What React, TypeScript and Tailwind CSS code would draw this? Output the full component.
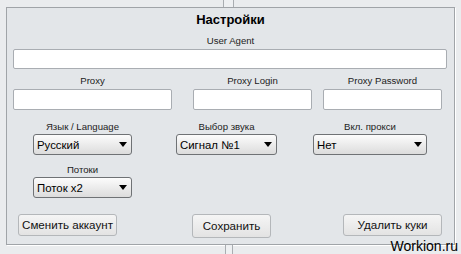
import React from 'react';

type BoxProps = { className?: string; children?: React.ReactNode };

const Label = ({ children, className = '' }: BoxProps) => (
  <div className={`text-center text-[9.6px] leading-[12px] text-[#1c1c1c] ${className}`}>{children}</div>
);

const Input = ({ className = '' }: BoxProps) => (
  <div className={`rounded-[2px] border border-[#a9adb2] bg-white ${className}`} />
);

const Select = ({ value, className = '' }: { value: string; className?: string }) => (
  <div
    className={`flex h-[21px] items-center justify-between rounded-[3px] border border-[#6f7275] bg-gradient-to-b from-[#fcfcfc] to-[#dcdcdc] pl-[3px] pr-[4px] text-[11.4px] leading-[14px] text-black ${className}`}
  >
    <span>{value}</span>
    <svg width="8" height="5" viewBox="0 0 8 5">
      <path d="M0 0H8L4 5Z" fill="#000" />
    </svg>
  </div>
);

const Button = ({ children, className = '' }: BoxProps) => (
  <div
    className={`flex items-center justify-center rounded-[3px] border border-[#b4b7ba] bg-gradient-to-b from-[#f5f5f5] to-[#e3e3e3] text-[11.6px] text-[#111] ${className}`}
  >
    {children}
  </div>
);

export default function App() {
  return (
    <div className="relative h-[254px] w-[461px] overflow-hidden bg-[#eaecee] font-['Liberation_Sans',Arial,sans-serif]">
      {/* splitter piece above the group box */}
      <div className="ml-[223px] h-[7px] w-[11px] border-x border-[#a9adb1] bg-[#eef0f2]" />

      <div className="ml-[6px] w-[449px] border border-[#a0a4a8] bg-[#e3e6e9] pb-[6px] shadow-[1px_1px_0_#ffffff]">
        <div className="pt-[4px] text-center text-[13px] font-bold leading-[16px] text-black">Настройки</div>

        <Label className="mt-[7px]">User Agent</Label>
        <Input className="ml-[6px] mt-[2px] h-[20px] w-[434px]" />

        {/* proxy fields */}
        <div className="mt-[6px] flex">
          <div className="ml-[6px] w-[159px]">
            <Label>Proxy</Label>
            <Input className="mt-[2px] h-[21px]" />
          </div>
          <div className="ml-[21px] w-[119px]">
            <Label>Proxy Login</Label>
            <Input className="mt-[2px] h-[21px]" />
          </div>
          <div className="ml-[11px] w-[119px]">
            <Label>Proxy Password</Label>
            <Input className="mt-[2px] h-[21px]" />
          </div>
        </div>

        {/* selects */}
        <div className="mt-[11px] flex">
          <div className="ml-[26px] w-[99px]">
            <Label>Язык / Language</Label>
            <Select value="Русский" className="mt-[1px]" />
          </div>
          <div className="ml-[44px] w-[101px]">
            <Label>Выбор звука</Label>
            <Select value="Сигнал №1" className="mt-[1px]" />
          </div>
          <div className="ml-[36px] w-[114px]">
            <Label>Вкл. прокси</Label>
            <Select value="Нет" className="mt-[1px]" />
          </div>
        </div>

        <div className="ml-[26px] mt-[9px] w-[99px]">
          <Label>Потоки</Label>
          <Select value="Поток x2" className="mt-[1px]" />
        </div>

        {/* buttons */}
        <div className="mt-[16px] flex items-start">
          <Button className="ml-[11px] h-[22px] w-[99px]">Сменить аккаунт</Button>
          <Button className="ml-[75px] h-[24px] w-[79px]">Сохранить</Button>
          <Button className="ml-[72px] h-[22px] w-[99px]">Удалить куки</Button>
        </div>
      </div>

      {/* splitter piece below */}
      <div className="ml-[225px] h-[9px] w-[8px] border-x border-[#a9adb1] bg-[#eef0f2]" />

      <div className="absolute bottom-0 right-[3px] text-[14px] leading-[15px] text-black">Workion.ru</div>
    </div>
  );
}
